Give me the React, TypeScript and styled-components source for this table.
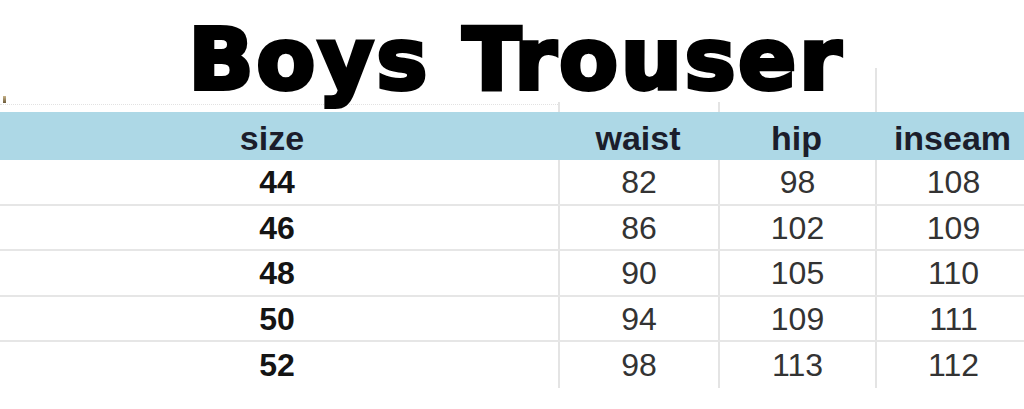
import React from "react";
import styled, { createGlobalStyle, css } from "styled-components";

const COLS = "558px 160px 157px 155px";

const Global = createGlobalStyle`
  *, *::before, *::after { box-sizing: border-box; }
  html, body { margin: 0; padding: 0; background: #fff; }
  body { overflow: hidden; }
`;

const Page = styled.div`
  width: 1024px;
  height: 409px;
  overflow: hidden;
  background: #fff;
  font-family: "Liberation Sans", Arial, sans-serif;
`;

const TitleBar = styled.header`
  height: 68px;
  display: flex;
  justify-content: center;
  padding-left: 8px;
`;

const Title = styled.h1`
  position: relative;
  z-index: 1;
  align-self: flex-start;
  display: inline-block;
  margin: 16px 0 0;
  font-family: "DejaVu Sans", sans-serif;
  font-weight: 700;
  font-size: 86px;
  line-height: 86px;
  letter-spacing: 2.5px;
  -webkit-text-stroke: 4px #000;
  color: #000;
  background: #fff;
  white-space: nowrap;
`;

const Table = styled.div`
  width: 1030px;
  display: flex;
  flex-direction: column;
`;

type Kind = "blank" | "head" | "body";

const Row = styled.div<{ $kind: Kind; $last?: boolean }>`
  display: grid;
  grid-template-columns: ${COLS};
  height: ${(p) => (p.$kind === "blank" ? "44px" : p.$kind === "head" ? "48px" : "45.5px")};
  background: ${(p) => (p.$kind === "head" ? "#add8e6" : "#fff")};
  ${(p) =>
    p.$kind === "body" &&
    !p.$last &&
    css`
      border-bottom: 2px solid #e6e6e6;
    `}
`;

const Cell = styled.div<{ $kind: Kind; $first?: boolean }>`
  display: flex;
  align-items: center;
  justify-content: center;
  white-space: nowrap;
  ${(p) =>
    !p.$first &&
    p.$kind !== "head" &&
    css`
      border-left: 2px solid #e4e4e4;
    `}
  ${(p) =>
    p.$kind === "head"
      ? css`
          font-size: 34px;
          font-weight: 700;
          color: #1b1d2b;
          padding-top: 4px;
          padding-right: ${p.$first ? "14px" : "0"};
        `
      : p.$first
      ? css`
          font-size: 32px;
          font-weight: 700;
          color: #141414;
          padding-top: 2px;
          padding-right: 4px;
        `
      : css`
          font-size: 32px;
          font-weight: 400;
          color: #333;
          padding-top: 2px;
        `}
`;

const BlankFirst = styled.div`
  display: flex;
  flex-direction: column;
  justify-content: flex-end;
  padding-bottom: 7px;
`;

const Mark = styled.span`
  display: block;
  width: 3px;
  height: 7px;
  margin-left: 3px;
  background: linear-gradient(#c9b48a, #6b5a3a);
`;

const Rule = styled.span`
  display: block;
  width: 100%;
  border-bottom: 1px dotted #e2e2e2;
  margin-top: 1px;
`;

const headers = ["size", "waist", "hip", "inseam"];
const rows: [string, string, string, string][] = [
  ["44", "82", "98", "108"],
  ["46", "86", "102", "109"],
  ["48", "90", "105", "110"],
  ["50", "94", "109", "111"],
  ["52", "98", "113", "112"],
];

export default function App() {
  return (
    <Page>
      <Global />
      <TitleBar>
        <Title>Boys Trouser</Title>
      </TitleBar>
      <Table>
        <Row $kind="blank">
          <BlankFirst>
            <Mark />
            <Rule />
          </BlankFirst>
          <Cell $kind="blank" />
          <Cell $kind="blank" />
          <Cell $kind="blank" />
        </Row>
        <Row $kind="head">
          {headers.map((h, i) => (
            <Cell key={h} $kind="head" $first={i === 0}>
              {h}
            </Cell>
          ))}
        </Row>
        {rows.map((r, ri) => (
          <Row key={r[0]} $kind="body" $last={ri === rows.length - 1}>
            {r.map((v, i) => (
              <Cell key={i} $kind="body" $first={i === 0}>
                {v}
              </Cell>
            ))}
          </Row>
        ))}
      </Table>
    </Page>
  );
}
